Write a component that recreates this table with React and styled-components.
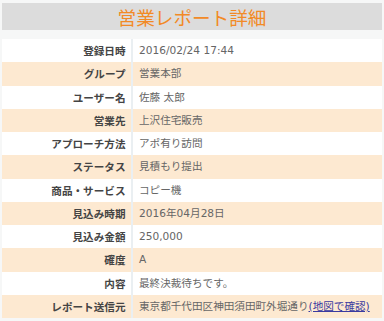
import { Fragment } from "react";
import styled, { createGlobalStyle } from "styled-components";

const GlobalStyle = createGlobalStyle`
  html, body {
    margin: 0;
    padding: 0;
    background: #f6f7f7;
  }
  body {
    font-family: "DejaVu Sans", "Noto Sans CJK JP", sans-serif;
  }
`;

const Page = styled.div`
  padding: 2.5px 2px 2px 2px;
  width: 384px;
  box-sizing: border-box;
`;

const Header = styled.h1`
  margin: 0;
  height: 27.5px;
  background: #dcdcdc;
  color: #f28a26;
  font-family: "Noto Sans CJK JP", sans-serif;
  font-weight: 400;
  font-size: 18.6px;
  line-height: 27.5px;
  text-align: center;
`;

const Table = styled.div`
  margin-top: 9px;
  display: grid;
  grid-template-columns: 129px 1fr;
`;

const Label = styled.div`
  height: 23.25px;
  line-height: 23.25px;
  padding-right: 5.5px;
  text-align: right;
  font-family: "Noto Sans CJK JP", sans-serif;
  font-weight: 700;
  font-size: 10.6px;
  color: #444;
  background: ${(p) => (p.$odd ? "#fde9d1" : "#ffffff")};
  white-space: nowrap;
`;

const Value = styled.div`
  height: 23.25px;
  line-height: 23.25px;
  padding-left: 6px;
  border-left: 2px solid #eaeff2;
  font-size: 10.6px;
  color: #666;
  background: ${(p) => (p.$odd ? "#fde9d1" : "#ffffff")};
  white-space: nowrap;
`;

const MapLink = styled.a`
  color: #3a3aa0;
  text-decoration: underline;
`;

const rows = [
  ["登録日時", "2016/02/24 17:44"],
  ["グループ", "営業本部"],
  ["ユーザー名", "佐藤 太郎"],
  ["営業先", "上沢住宅販売"],
  ["アプローチ方法", "アポ有り訪問"],
  ["ステータス", "見積もり提出"],
  ["商品・サービス", "コピー機"],
  ["見込み時期", "2016年04月28日"],
  ["見込み金額", "250,000"],
  ["確度", "A"],
  ["内容", "最終決裁待ちです。"],
];

const App = () => {
  return (
    <Page>
      <GlobalStyle />
      <Header>営業レポート詳細</Header>
      <Table>
        {rows.map(([label, value], i) => (
          <Fragment key={label}>
            <Label $odd={i % 2 === 1}>{label}</Label>
            <Value $odd={i % 2 === 1}>{value}</Value>
          </Fragment>
        ))}
        <Label $odd>レポート送信元</Label>
        <Value $odd>
          東京都千代田区神田須田町外堀通り<MapLink href="#">(地図で確認)</MapLink>
        </Value>
      </Table>
    </Page>
  );
};

export default App;
